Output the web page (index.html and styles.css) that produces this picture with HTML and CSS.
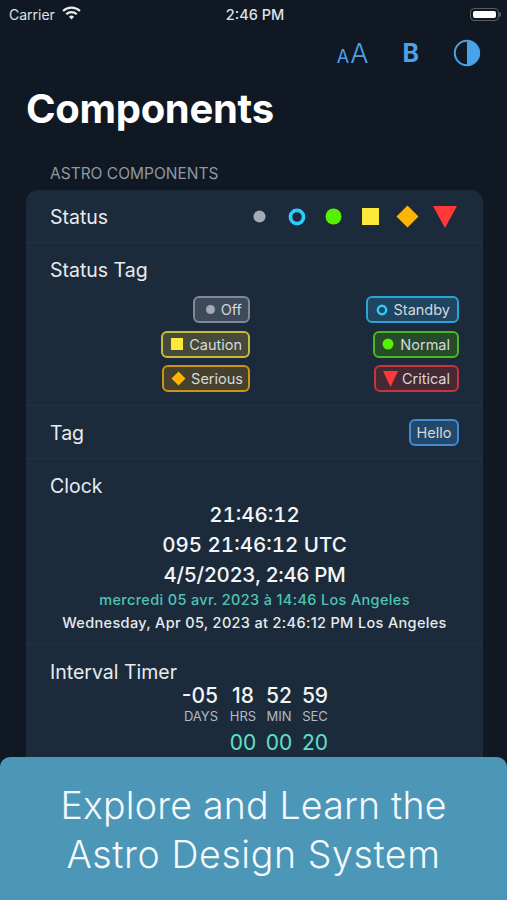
FILE: index.html
```html
<!DOCTYPE html>
<html lang="en">
<head>
    <meta charset="UTF-8">
    <meta name="viewport" content="width=device-width, initial-scale=1.0">
    <title>Components</title>
    <link rel="stylesheet" href="styles.css">
</head>
<body>
    <div class="status-bar">
        <div class="status-left">
            <span>Carrier</span>
            <svg class="wifi" width="19" height="14" viewBox="0 0 18 13">
                <path d="M1 4.6a11.6 11.6 0 0 1 16 0" fill="none" stroke="#e8eaec" stroke-width="2"/>
                <path d="M4 7.6a7.3 7.3 0 0 1 10 0" fill="none" stroke="#e8eaec" stroke-width="2"/>
                <path d="M6.6 10a3.4 3.4 0 0 1 4.8 0L9 12.6z" fill="#e8eaec"/>
            </svg>
        </div>
        <span class="status-time">2:46 PM</span>
        <div class="status-right">
            <div class="battery"><div class="battery-fill"></div></div>
            <div class="battery-nub"></div>
        </div>
    </div>

    <div class="toolbar">
        <span class="tool-size"><small>A</small>A</span>
        <span class="tool-bold">B</span>
        <svg width="28" height="28" viewBox="0 0 28 28">
            <circle cx="14" cy="14" r="12.2" fill="none" stroke="#4aa3e8" stroke-width="2"/>
            <path d="M14 2a12 12 0 0 1 0 24z" fill="#4aa3e8"/>
        </svg>
    </div>

    <h1 class="title">Components</h1>
    <div class="section-label">ASTRO COMPONENTS</div>

    <div class="card">
        <div class="row row-inline">
            <span class="row-name">Status</span>
            <div class="status-icons">
                <svg width="13" height="13" viewBox="0 0 14 14"><circle cx="7" cy="7" r="6.500" fill="#a4abb6"/></svg>
                <svg width="18" height="18" viewBox="0 0 18 18"><circle cx="9" cy="9" r="6.600" fill="none" stroke="#2dccff" stroke-width="3.600"/></svg>
                <svg width="17" height="17" viewBox="0 0 17 17"><circle cx="8.500" cy="8.500" r="8" fill="#56f000"/></svg>
                <svg width="17" height="17" viewBox="0 0 17 17"><rect width="17" height="17" fill="#fce83a"/></svg>
                <svg width="23" height="23" viewBox="0 0 23 23"><path d="M11.500 0.500 22.500 11.500 11.500 22.500 0.500 11.500z" fill="#ffb302"/></svg>
                <svg width="24" height="22" viewBox="0 0 24 22"><path d="M0 0H24L12 22z" fill="#ff3838"/></svg>
            </div>
        </div>

        <div class="row row-tags">
            <div class="row-name">Status Tag</div>
            <div class="tag-grid">
                <span class="tag tag-off"><svg width="9" height="9" viewBox="0 0 9 9"><circle cx="4.500" cy="4.500" r="4.500" fill="#a4abb6"/></svg>Off</span>
                <span class="tag tag-standby"><svg width="12" height="12" viewBox="0 0 12 12"><circle cx="6" cy="6" r="4.200" fill="none" stroke="#2dccff" stroke-width="2.400"/></svg>Standby</span>
                <span class="tag tag-caution"><svg width="12" height="12" viewBox="0 0 12 12"><rect width="12" height="12" fill="#fce83a"/></svg>Caution</span>
                <span class="tag tag-normal"><svg width="12" height="12" viewBox="0 0 12 12"><circle cx="6" cy="6" r="5.500" fill="#56f000"/></svg>Normal</span>
                <span class="tag tag-serious"><svg width="15" height="15" viewBox="0 0 16 16"><path d="M8 0.500 15.500 8 8 15.500 0.500 8z" fill="#ffb302"/></svg>Serious</span>
                <span class="tag tag-critical"><svg width="15" height="16" viewBox="0 0 15 16"><path d="M0 0H15L7.500 16z" fill="#ff3838"/></svg>Critical</span>
            </div>
        </div>

        <div class="row row-inline">
            <span class="row-name">Tag</span>
            <span class="tag tag-hello">Hello</span>
        </div>

        <div class="row row-clock">
            <div class="row-name">Clock</div>
            <div class="clock-lines">
                <div class="clock-big">21:46:12</div>
                <div class="clock-big">095 21:46:12 UTC</div>
                <div class="clock-big clock-date">4/5/2023, 2:46 PM</div>
                <div class="clock-small clock-teal">mercredi 05 avr. 2023 à 14:46 Los Angeles</div>
                <div class="clock-small">Wednesday, Apr 05, 2023 at 2:46:12 PM Los Angeles</div>
            </div>
        </div>

        <div class="row row-timer">
            <div class="row-name">Interval Timer</div>
            <div class="timer-grid">
                <span class="timer-num timer-first">-05</span>
                <span class="timer-num">18</span>
                <span class="timer-num">52</span>
                <span class="timer-num">59</span>
                <span class="timer-unit timer-first">DAYS</span>
                <span class="timer-unit">HRS</span>
                <span class="timer-unit">MIN</span>
                <span class="timer-unit">SEC</span>
                <span></span>
                <span class="timer-num timer-teal">00</span>
                <span class="timer-num timer-teal">00</span>
                <span class="timer-num timer-teal">20</span>
                <span></span>
                <span class="timer-unit">HRS</span>
                <span class="timer-unit">MIN</span>
                <span class="timer-unit">SEC</span>
            </div>
        </div>
    </div>

    <div class="banner">Explore and Learn the<br><span class="banner-second">Astro Design System</span></div>
</body>
</html>
```

FILE: styles.css
```css
html, body {
    height: 900px;
    overflow: hidden;
}
body {
    margin: 0;
    position: relative;
    background-color: #101923;
    color: #f2f4f6;
    font-family: Inter, "Liberation Sans", sans-serif;
}

/* status bar */
.status-bar {
    height: 28px;
    padding: 0 6px 0 9px;
    display: flex;
    align-items: center;
    justify-content: space-between;
    font-size: 14px;
    color: #dfe2e5;
}
.status-left,
.status-right {
    flex: 1;
    display: flex;
    align-items: center;
}
.status-left {
    gap: 7px;
}
.status-right {
    justify-content: flex-end;
}
.wifi {
    margin-bottom: 2px;
}
.status-time {
    font-weight: 500;
    font-size: 14.500px;
}
.battery {
    width: 29px;
    height: 13px;
    box-sizing: border-box;
    padding: 2px;
    border: 1.500px solid #555b62;
    border-radius: 4px;
}
.battery-fill {
    height: 100%;
    background-color: #fff;
    border-radius: 2px;
}
.battery-nub {
    width: 2px;
    height: 5px;
    background-color: #555b62;
    border-radius: 0 2px 2px 0;
}

/* toolbar */
.toolbar {
    height: 50px;
    padding: 0 26px 0 0;
    display: flex;
    align-items: center;
    justify-content: flex-end;
    color: #4aa3e8;
}
.tool-size {
    font-size: 27px;
    font-weight: 300;
    margin-right: 34px;
}
.tool-size small {
    font-size: 18px;
    font-weight: 400;
    margin-right: 1px;
}
.tool-bold {
    font-size: 25px;
    font-weight: 700;
    margin-right: 34px;
}

.title {
    margin: 6px 0 0 26px;
    font-size: 40px;
    line-height: 50px;
    font-weight: 700;
    color: #fff;
    letter-spacing: -0.300px;
}
.section-label {
    margin: 31px 0 7px 50px;
    font-size: 15.500px;
    line-height: 18px;
    color: #8f98a3;
}

/* card */
.card {
    margin: 0 24px 0 26px;
    background-color: #1c2b3b;
    border-radius: 12px;
    overflow: hidden;
}
.row {
    padding: 0 24px;
    border-bottom: 1px solid #223243;
}
.row-inline {
    height: 51px;
    padding-top: 1px;
    display: flex;
    align-items: center;
    justify-content: space-between;
}
.row-name {
    font-size: 19.500px;
    line-height: 24px;
    color: #e8ebee;
}
.status-icons {
    margin-right: -4px;
    display: grid;
    grid-template-columns: repeat(6, 37px);
    justify-items: center;
    align-items: center;
}

/* tags */
.row-tags {
    padding-top: 15px;
    height: 147px;
}
.tag-grid {
    margin-top: 14px;
    display: grid;
    grid-template-columns: 200px 209px;
    justify-items: end;
    row-gap: 7.500px;
}
.tag {
    height: 27px;
    box-sizing: border-box;
    padding: 0 7px;
    display: inline-flex;
    align-items: center;
    gap: 6px;
    border: 2px solid;
    border-radius: 6px;
    font-size: 14.500px;
    color: #d5d9dd;
}
.tag-off {
    border-color: #7e8896;
    background-color: #3c4a5a;
    padding: 0 6px 0 11px;
}
.tag-standby {
    border-color: #2aa5d6;
    background-color: #1f4560;
    padding-left: 8px;
}
.tag-caution {
    border-color: #c9bb3a;
    background-color: #464a3a;
    padding: 0 6px 0 8px;
}
.tag-normal {
    border-color: #4bb81c;
    background-color: #254a2c;
}
.tag-serious {
    border-color: #cf9414;
    background-color: #46412e;
    padding: 0 5px 0 7px;
    gap: 5px;
}
.tag-critical {
    border-color: #c7343c;
    background-color: #452a36;
    gap: 4px;
}
.tag-hello {
    margin-top: -1px;
    border-color: #3f8ad0;
    background-color: #24486c;
    padding: 0 5.500px;
}

/* clock */
.row-clock {
    height: 186px;
    padding-top: 15px;
    box-sizing: border-box;
}
.clock-lines {
    padding-top: 2px;
    text-align: center;
}
.clock-big {
    font-size: 20.500px;
    line-height: 30px;
    font-weight: 500;
    color: #f4f6f8;
    font-variant-numeric: tabular-nums;
}
.clock-date {
    letter-spacing: -0.400px;
}
.clock-small {
    font-size: 14.500px;
    line-height: 23px;
    font-weight: 500;
    letter-spacing: 0.340px;
    color: #e8ebee;
}
.clock-teal {
    margin-top: -1px;
    color: #4fc4b6;
    line-height: 22px;
}

/* timer */
.row-timer {
    padding-top: 15px;
    height: 200px;
    border-bottom: none;
}
.timer-grid {
    margin-top: -1px;
    margin-left: 125px;
    display: grid;
    grid-template-columns: 50px 36px 36px 36px;
    justify-content: start;
    text-align: center;
}
.timer-first {
    padding-right: 7px;
    text-align: right;
}
.timer-num {
    font-size: 21px;
    line-height: 26px;
    font-weight: 500;
}
.timer-unit {
    font-size: 13px;
    line-height: 14px;
    color: #b4bac1;
    margin-bottom: 7px;
}
.timer-teal {
    color: #5fe0cd;
    font-weight: 400;
}

/* promo banner over the list */
.banner {
    position: absolute;
    left: 0;
    right: 0;
    bottom: 0;
    height: 143px;
    padding-top: 25px;
    box-sizing: border-box;
    background-color: #4c96b7;
    border-radius: 10px 10px 0 0;
    text-align: center;
    font-size: 37.500px;
    line-height: 48.500px;
    font-weight: 300;
    color: #f4fafc;
    letter-spacing: 0.200px;
}
.banner-second {
    letter-spacing: 0.600px;
}
```
